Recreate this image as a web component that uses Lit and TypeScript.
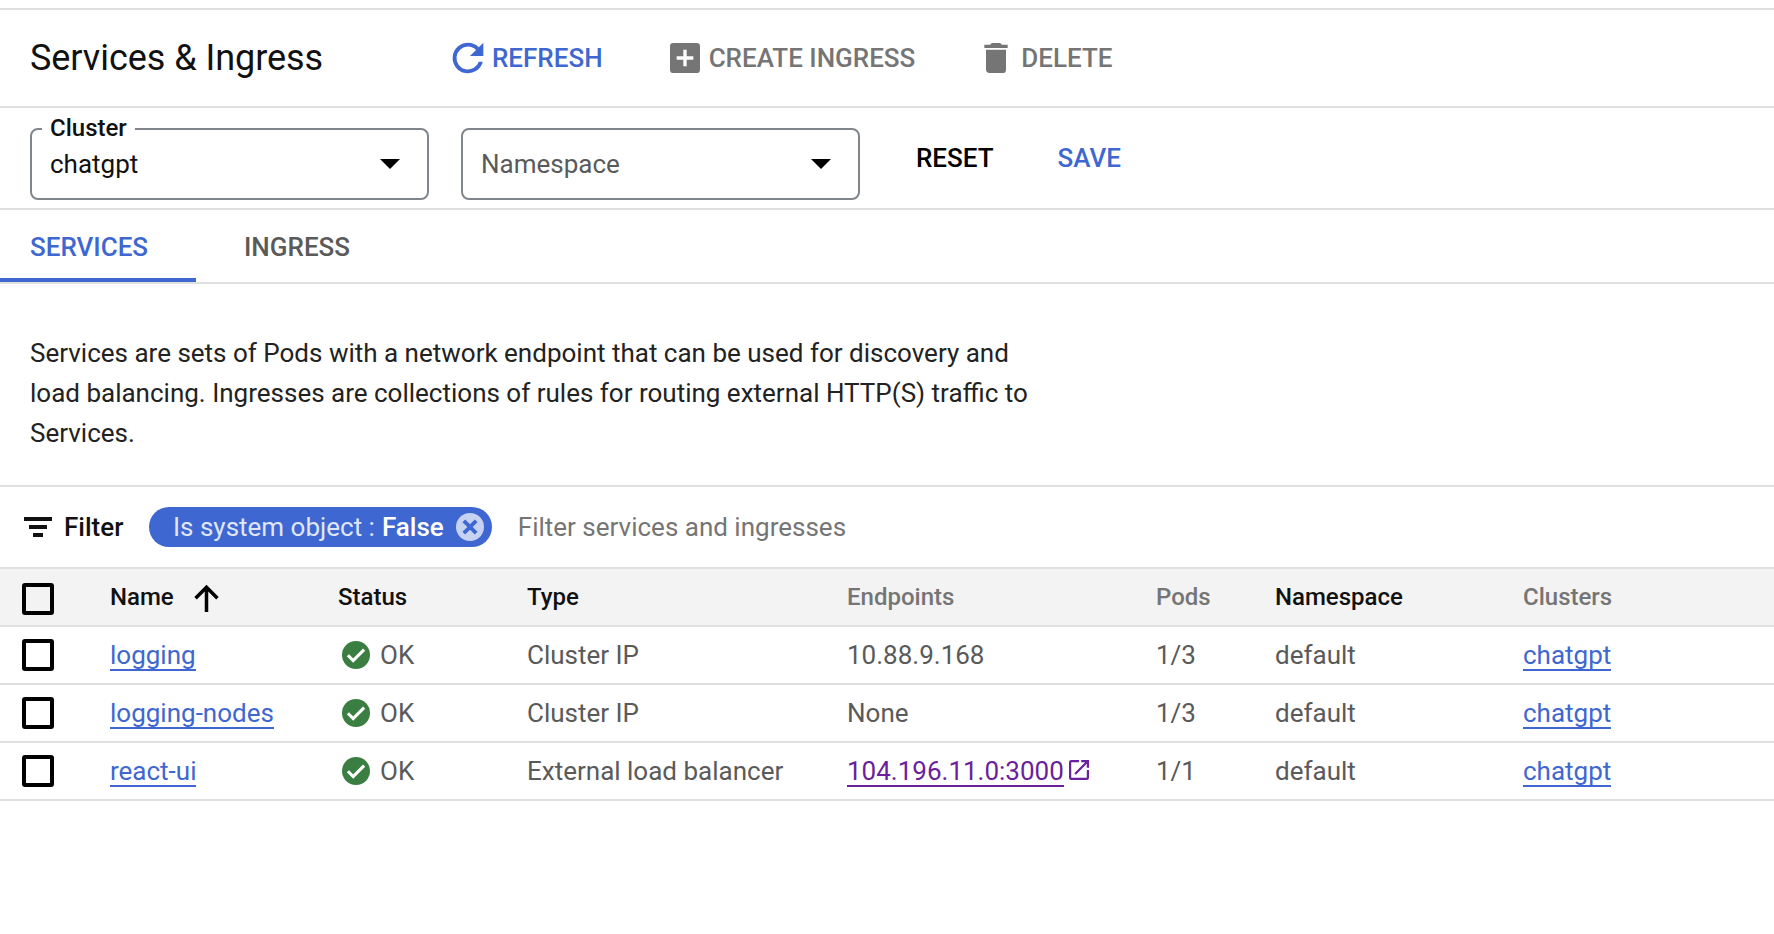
import { LitElement, html, css, svg } from 'lit';
import { customElement } from 'lit/decorators.js';

interface Row {
  name: string;
  type: string;
  endpoint: string;
  external?: boolean;
  pods: string;
}

const ROWS: Row[] = [
  { name: 'logging', type: 'Cluster IP', endpoint: '10.88.9.168', pods: '1/3' },
  { name: 'logging-nodes', type: 'Cluster IP', endpoint: 'None', pods: '1/3' },
  { name: 'react-ui', type: 'External load balancer', endpoint: '104.196.11.0:3000', external: true, pods: '1/1' },
];

const refreshIcon = svg`<path d="M17.65 6.35A7.95 7.95 0 0 0 12 4a8 8 0 1 0 7.73 10h-2.08A6 6 0 1 1 12 6c1.66 0 3.14.69 4.22 1.78L13 11h7V4l-2.35 2.35z"/>`;
const plusBoxIcon = svg`<path d="M19 3H5a2 2 0 0 0-2 2v14a2 2 0 0 0 2 2h14a2 2 0 0 0 2-2V5a2 2 0 0 0-2-2zm-2 10h-4v4h-2v-4H7v-2h4V7h2v4h4v2z"/>`;
const trashIcon = svg`<path d="M6 19c0 1.1.9 2 2 2h8a2 2 0 0 0 2-2V7H6v12zM19 4h-3.5l-1-1h-5l-1 1H5v2h14V4z"/>`;
const checkIcon = svg`<circle cx="12" cy="12" r="10"/><path d="M6.2 12.2l3.8 3.8 7.8-7.8" fill="none" stroke="#fff" stroke-width="2.2"/>`;
const openIcon = svg`<path d="M19 19H5V5h7V3H5a2 2 0 0 0-2 2v14a2 2 0 0 0 2 2h14a2 2 0 0 0 2-2v-7h-2v7zM14 3v2h3.59l-9.83 9.83 1.41 1.41L19 6.41V10h2V3h-7z"/>`;

@customElement('app-root')
export class AppRoot extends LitElement {
  static override styles = css`
    :host {
      display: block;
      height: 934px;
      background: #fff;
      font-family: Roboto, "Liberation Sans", sans-serif;
      font-size: 26px;
      color: #5a5a5a;
      overflow: hidden;
    }
    .page { padding-top: 8px; }
    svg { display: block; fill: currentColor; flex: none; }
    a { color: #3f67d1; text-decoration: none; border-bottom: 2px solid currentColor; padding-top: 2px; line-height: 28px; display: inline-block; }

    .header {
      display: flex;
      align-items: center;
      height: 96px;
      padding-left: 30px;
      border-top: 2px solid #e0e0e0;
      border-bottom: 2px solid #e0e0e0;
      font-weight: 500;
    }
    .title { font-size: 36px; font-weight: 400; color: #111; width: 415px; letter-spacing: -0.05px; }
    .action { display: flex; align-items: center; color: #757575; }
    .action.primary { color: #3f67d1; }
    .action svg { width: 40px; height: 40px; }
    .refresh { margin-right: 62px; }
    .refresh svg { width: 46px; height: 46px; margin-right: 1px; }
    .create { margin-right: 61px; }
    .create svg { margin-right: 4px; }
    .delete svg { margin-right: 5px; }

    .filters {
      display: flex;
      align-items: center;
      height: 100px;
      padding-left: 30px;
      border-bottom: 2px solid #e0e0e0;
    }
    .select {
      position: relative;
      align-self: flex-start;
      box-sizing: border-box;
      width: 399px;
      height: 72px;
      margin: 20px 32px 0 0;
      padding: 0 27px 0 18px;
      display: flex;
      align-items: center;
      justify-content: space-between;
      border: 2px solid #80868b;
      border-radius: 8px;
    }
    .select.filled { color: #111; }
    .legend {
      position: absolute;
      top: -15px;
      left: 10px;
      padding: 0 8px;
      background: #fff;
      color: #111;
      font-size: 24px;
      font-weight: 500;
      line-height: 26px;
    }
    .caret { width: 0; height: 0; border: 10px solid transparent; border-top: 10px solid #000; border-bottom: 0; }
    .text-btn { font-weight: 500; color: #000; margin: 0 64px 0 24px; }
    .text-btn.save { color: #3f67d1; margin: 0; }

    .tabs {
      display: flex;
      height: 72px;
      border-bottom: 2px solid #e0e0e0;
      font-weight: 500;
    }
    .tab {
      box-sizing: border-box;
      display: flex;
      align-items: center;
      height: 72px;
      padding: 5px 48px 0 30px;
      border-bottom: 4px solid transparent;
    }
    .tab.active { width: 196px; color: #3f67d1; border-bottom-color: #3f67d1; }
    .tab + .tab { padding-left: 48px; }

    .intro {
      box-sizing: border-box;
      height: 203px;
      padding: 49px 0 0 30px;
      border-bottom: 2px solid #e0e0e0;
      color: #222;
      line-height: 40px;
    }
    .intro p { margin: 0; width: 1010px; }

    .filterbar {
      display: flex;
      align-items: center;
      height: 80px;
      color: #757575;
    }
    .filter-label { display: flex; align-items: center; width: 149px; padding-left: 24px; box-sizing: border-box; color: #111; font-weight: 500; }
    .filter-label svg { width: 28px; height: 20px; margin-right: 12px; }
    .chip {
      display: flex;
      align-items: center;
      box-sizing: border-box;
      height: 40px;
      padding: 0 8px 0 24px;
      margin-right: 26px;
      border-radius: 20px;
      background: #3f67d1;
      color: #dfe6f8;
    }
    .chip b { font-weight: 500; color: #fff; margin-left: 7px; }
    .chip-x { margin-left: 12px; width: 28px; height: 28px; }

    .row {
      display: grid;
      grid-template-columns: 110px 228px 189px 320px 309px 119px 248px 1fr;
      align-items: center;
      height: 56px;
      border-top: 2px solid #e0e0e0;
    }
    .row:last-child { border-bottom: 2px solid #e0e0e0; }
    .row.head { background: #f3f3f3; color: #757575; font-size: 24px; }
    .row.head .box { margin-top: 4px; }
    .strong { color: #111; font-weight: 500; }
    .muted { font-weight: 500; }
    .box { box-sizing: border-box; width: 32px; height: 32px; margin-left: 22px; border: 4px solid #000; border-radius: 3px; }
    .name { display: flex; align-items: center; }
    .name svg { width: 35px; height: 35px; margin-left: 15px; fill: none; stroke: #000; stroke-width: 2.4; }
    .status { display: flex; align-items: center; padding-left: 4px; }
    .status svg { width: 28px; height: 28px; margin-right: 10px; color: #3a7f41; }
    a.visited { color: #6a1f9c; }
    .endpoint { display: flex; align-items: center; color: #6a1f9c; }
    .endpoint svg { width: 20px; height: 20px; margin-left: 5px; margin-top: -2px; }
    .plain { color: #5a5a5a; }
    .cell-link { justify-self: start; }
  `;

  renderRow(r: Row) {
    return html`<div class="row">
      <div class="box"></div>
      <div><a href="#">${r.name}</a></div>
      <div class="status"><svg viewBox="2 2 20 20">${checkIcon}</svg><span>OK</span></div>
      <div>${r.type}</div>
      <div class="endpoint">
        ${r.external
          ? html`<a class="visited" href="#">${r.endpoint}</a><svg viewBox="3 3 18 18">${openIcon}</svg>`
          : html`<span class="plain">${r.endpoint}</span>`}
      </div>
      <div>${r.pods}</div>
      <div>default</div>
      <div class="cell-link"><a href="#">chatgpt</a></div>
    </div>`;
  }

  override render() {
    return html`<div class="page">
      <div class="header">
        <div class="title">Services &amp; Ingress</div>
        <div class="action primary refresh"><svg viewBox="0 0 24 24">${refreshIcon}</svg><span>REFRESH</span></div>
        <div class="action create"><svg viewBox="0 0 24 24">${plusBoxIcon}</svg><span>CREATE INGRESS</span></div>
        <div class="action delete"><svg viewBox="0 0 24 24">${trashIcon}</svg><span>DELETE</span></div>
      </div>

      <div class="filters">
        <div class="select filled"><span class="legend">Cluster</span><span>chatgpt</span><span class="caret"></span></div>
        <div class="select"><span>Namespace</span><span class="caret"></span></div>
        <div class="text-btn">RESET</div>
        <div class="text-btn save">SAVE</div>
      </div>

      <div class="tabs">
        <div class="tab active">SERVICES</div>
        <div class="tab">INGRESS</div>
      </div>

      <div class="intro">
        <p>Services are sets of Pods with a network endpoint that can be used for discovery and load balancing. Ingresses are collections of rules for routing external HTTP(S) traffic to Services.</p>
      </div>

      <div class="filterbar">
        <div class="filter-label">
          <svg viewBox="0 0 28 20"><path d="M0 0h28v4H0zM5 8h18v4H5zM9 16h10v4H9z"/></svg>
          <span>Filter</span>
        </div>
        <div class="chip">
          <span>Is system object :</span><b>False</b>
          <svg class="chip-x" viewBox="1 1 22 22"><path fill="#c5d2f1" d="M12 1a11 11 0 1 0 0 22 11 11 0 0 0 0-22z"/><path fill="#3f67d1" d="M15.8 6.1 17.9 8.2 14.1 12l3.8 3.8-2.1 2.1-3.8-3.8-3.8 3.8-2.1-2.1 3.8-3.8-3.8-3.8 2.1-2.1 3.8 3.8z"/></svg>
        </div>
        <span>Filter services and ingresses</span>
      </div>

      <div class="table">
        <div class="row head">
          <div class="box"></div>
          <div class="name strong"><span>Name</span><svg viewBox="0 0 24 24"><path d="M12 22V5M4.5 12.5 12 5l7.5 7.5"/></svg></div>
          <div class="strong">Status</div>
          <div class="strong">Type</div>
          <div class="muted">Endpoints</div>
          <div class="muted">Pods</div>
          <div class="strong">Namespace</div>
          <div class="muted">Clusters</div>
        </div>
        ${ROWS.map((r) => this.renderRow(r))}
      </div>
    </div>`;
  }
}
